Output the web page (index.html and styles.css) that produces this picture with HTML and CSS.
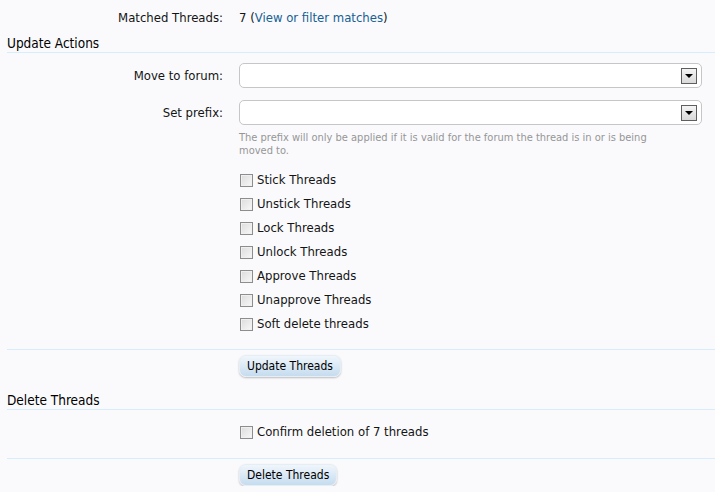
FILE: index.html
```html
<!DOCTYPE html>
<html>
<head>
<meta charset="utf-8">
<link rel="stylesheet" href="styles.css">
</head>
<body>
<form class="form">
  <div class="row row-info">
    <div class="label">Matched Threads:</div>
    <div class="ctrl">7 (<a class="link" href="#">View or filter matches</a>)</div>
  </div>

  <h3 class="section">Update Actions</h3>

  <div class="row row-select">
    <div class="label">Move to forum:</div>
    <div class="ctrl"><div class="select"><span class="arrow"></span></div></div>
  </div>
  <div class="row row-select row-prefix">
    <div class="label">Set prefix:</div>
    <div class="ctrl">
      <div class="select"><span class="arrow"></span></div>
      <p class="hint">The prefix will only be applied if it is valid for the forum the thread is in or is being moved to.</p>
    </div>
  </div>

  <div class="row row-checks">
    <div class="label"></div>
    <ul class="ctrl checks">
      <li><label><input type="checkbox" class="cb"> Stick Threads</label></li>
      <li><label><input type="checkbox" class="cb"> Unstick Threads</label></li>
      <li><label><input type="checkbox" class="cb"> Lock Threads</label></li>
      <li><label><input type="checkbox" class="cb"> Unlock Threads</label></li>
      <li><label><input type="checkbox" class="cb"> Approve Threads</label></li>
      <li><label><input type="checkbox" class="cb"> Unapprove Threads</label></li>
      <li><label><input type="checkbox" class="cb"> Soft delete threads</label></li>
    </ul>
  </div>

  <div class="row row-submit">
    <div class="label"></div>
    <div class="ctrl"><button type="button" class="button">Update Threads</button></div>
  </div>

  <h3 class="section section-delete">Delete Threads</h3>

  <div class="row row-confirm">
    <div class="label"></div>
    <ul class="ctrl checks">
      <li><label><input type="checkbox" class="cb"> Confirm deletion of 7 threads</label></li>
    </ul>
  </div>

  <div class="row row-submit">
    <div class="label"></div>
    <div class="ctrl"><button type="button" class="button">Delete Threads</button></div>
  </div>
</form>
</body>
</html>
```

FILE: styles.css
```css
html, body {
  margin: 0;
  padding: 0;
  background: #fafafd;
}
body {
  font-family: "DejaVu Sans Condensed", "DejaVu Sans", sans-serif;
  font-stretch: condensed;
  font-size: 13px;
  color: #141414;
}
.form {
  margin: 0;
  padding: 0 0 0 7px;
}
.row {
  display: grid;
  grid-template-columns: 216px 1fr;
  column-gap: 16px;
  padding-right: 13px;
}
.label {
  text-align: right;
}
.ctrl {
  margin: 0;
  padding: 0;
}
.row-info {
  padding-top: 10px;
  line-height: 16px;
}
.link {
  color: #176093;
  text-decoration: none;
}
.section {
  margin: 8px 0 0 0;
  font-size: 13.5px;
  font-weight: normal;
  line-height: 18px;
  padding-bottom: 0;
  border-bottom: 1px solid #d7edfc;
  color: #000;
}
.row-select {
  align-items: start;
  margin-top: 10px;
}
.row-select .label {
  line-height: 25px;
}
.row-prefix {
  margin-top: 12px;
}
.select {
  box-sizing: border-box;
  height: 25px;
  background: #fff;
  border: 1px solid #c6c6c6;
  border-radius: 5px;
  display: flex;
  align-items: center;
  justify-content: flex-end;
  padding-right: 4px;
}
.arrow {
  box-sizing: border-box;
  width: 16px;
  height: 16px;
  border: 1px solid #5e5e5e;
  background: linear-gradient(#f4f4f4, #d9d9d9);
  position: relative;
}
.arrow::after {
  content: "";
  position: absolute;
  left: 3px;
  top: 5px;
  border-left: 4px solid transparent;
  border-right: 4px solid transparent;
  border-top: 4px solid #000;
}
.hint {
  margin: 6px 0 0 0;
  font-size: 11px;
  line-height: 13px;
  color: #969696;
  max-width: 420px;
}
.checks {
  list-style: none;
}
.row-checks .checks {
  margin-top: 11px;
}
.checks li {
  height: 24px;
  line-height: 24px;
}
.checks label {
  display: flex;
  align-items: center;
  gap: 4px;
}
.cb {
  appearance: none;
  -webkit-appearance: none;
  box-sizing: border-box;
  width: 13px;
  height: 13px;
  margin: 0 0 0 1px;
  border: 1px solid #8d8d8d;
  background: linear-gradient(135deg, #dcdcdc, #f8f8f8);
  box-shadow: inset 0 0 0 1px #f0f0f0;
}
.row-submit {
  border-top: 1px solid #d7edfc;
  margin-top: 13px;
  padding-top: 5px;
}
.button {
  font-family: inherit;
  font-stretch: condensed;
  font-size: 12px;
  color: #000;
  height: 22px;
  padding: 0 7px;
  border: 1px solid #e6eef5;
  border-radius: 7px;
  background: linear-gradient(#f0f6fb, #c5dcef);
  box-shadow: 0 1px 2px rgba(0,0,0,0.25);
}
.section-delete {
  margin-top: 14px;
}
.row-confirm .checks {
  margin-top: 10px;
}
.row-confirm + .row-submit {
  margin-top: 14px;
}
```
